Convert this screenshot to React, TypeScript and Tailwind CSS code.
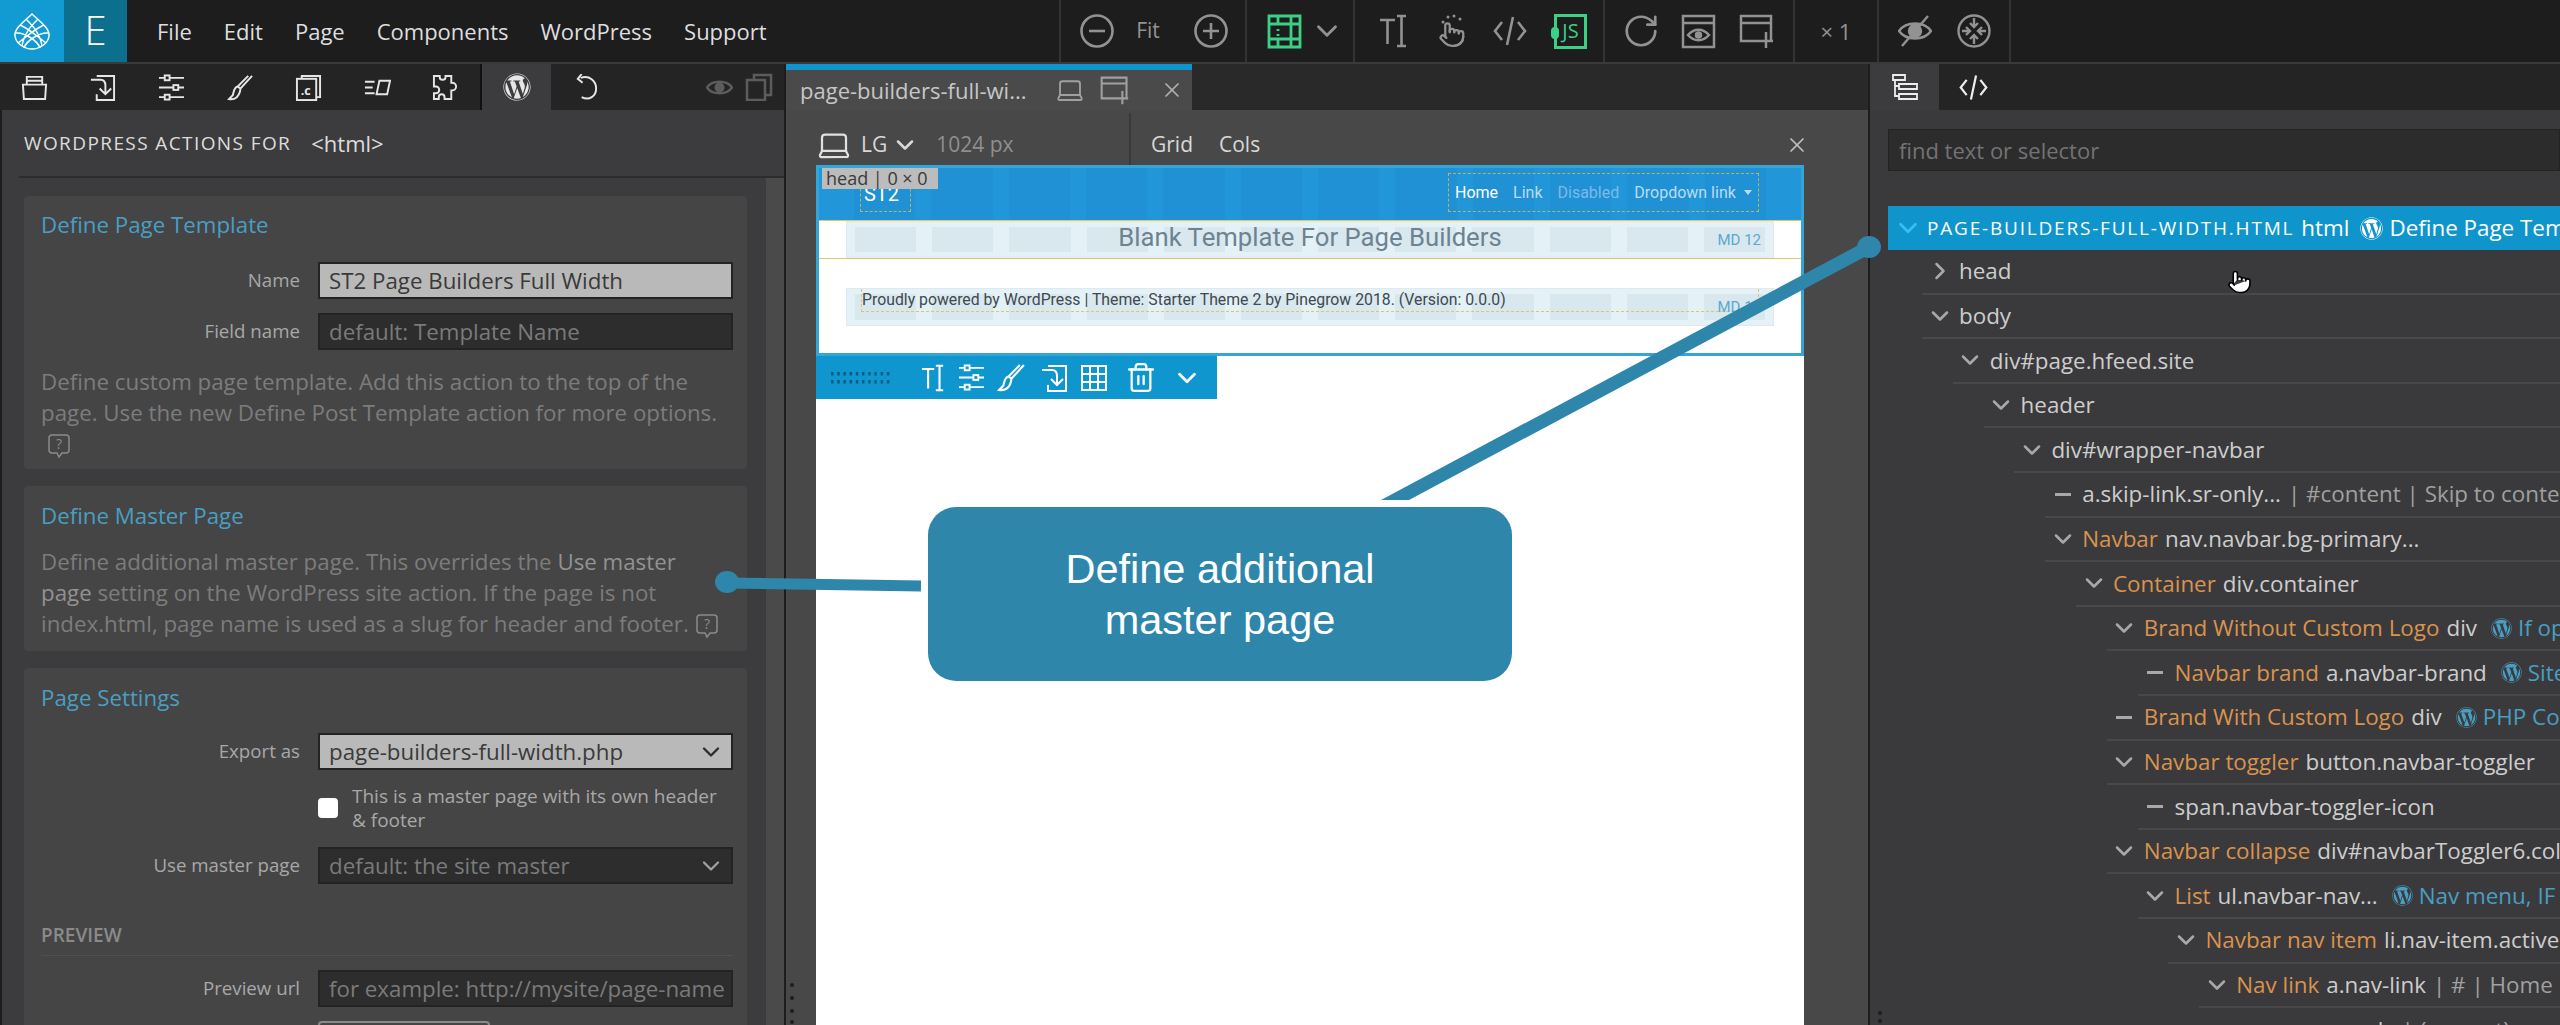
import React from "react";
import { FaWordpress } from "react-icons/fa";
import { ChevronDown, ChevronRight, Laptop, Pointer, RotateCw, Trash2, X } from "lucide-react";

type IP = { className?: string; children?: React.ReactNode; vb?: string; sw?: number };
function S({ className = "", children, vb = "0 0 28 28", sw = 2 }: IP) {
  return (
    <svg viewBox={vb} fill="none" stroke="currentColor" strokeWidth={sw} className={className}>
      {children}
    </svg>
  );
}
const Folder = (p: IP) => (
  <S {...p}><path d="M6 11V3h16v8M6 7h16M2 11h24l-1 15H3z" /></S>
);
const ImportI = (p: IP) => (
  <S {...p}><path d="M8 2h18v25H8v-6M2 6h10c4 0 5 3 5 6v9M11 15l6 6 6-6" /></S>
);
const Sliders = (p: IP) => (
  <S {...p}><path d="M1 4h6M12 4h15M1 14h15M21 14h6M1 24h6M12 24h15" /><rect x="7" y="1.5" width="5" height="5" /><rect x="16" y="11.5" width="5" height="5" /><rect x="7" y="21.5" width="5" height="5" /></S>
);
const Brush = (p: IP) => (
  <S {...p}><path d="M26 2 14 15l-3-2L22 2M11 13c-4 1-4 6-5 9l-4 4c6 1 11-2 12-11" /></S>
);
const CopyC = (p: IP) => (
  <S {...p}><path d="M7 5V2h19v22h-4" /><rect x="2" y="5" width="20" height="22" /><text x="6" y="22" fontSize="13" fill="currentColor" stroke="none" fontWeight="700" fontFamily="Open Sans">.c</text></S>
);
const Align = (p: IP) => (
  <S {...p}><path d="M1 8h10M1 14h8M1 20h10M16 7h11l-3 14H13z" /></S>
);
const Puzzle = (p: IP) => (
  <S {...p}><path d="M2 2h6v1a3 3 0 0 0 6 0V2h6v7h1a3.5 3.5 0 0 1 0 8h-1v9h-7v-2a3 3 0 0 0-6 0v2H2v-6h2a3 3 0 0 0 0-7H2z" /></S>
);
const Undo = (p: IP) => (
  <S {...p}><path d="M9 4c9-3 16 3 16 11s-7 13-15 9M10 0 6 5l5 4" /></S>
);
const Eye = (p: IP) => (
  <S {...p} sw={2.5}><path d="M1 14C6 6 22 6 27 14 22 22 6 22 1 14z" /><circle cx="14" cy="14" r="4" fill="currentColor" /></S>
);
const Pages = (p: IP) => (
  <S {...p} sw={2.5}><path d="M9 7V2h17v20h-6" /><rect x="2" y="7" width="18" height="20" /></S>
);
const TI = (p: IP) => (
  <S {...p} vb="0 0 27 34" sw={2.6}><path d="M0 6h15M7.5 6v24M17 2h9M21.500 2v30M17 32h9" /></S>
);
const Table = (p: IP) => (
  <S {...p}><path d="M2 2h24v24H2zM2 10h24M2 18h24M10 2v24M18 2v24" /></S>
);
const CodeI = (p: IP) => (
  <S {...p} vb="0 0 34 34" sw={2.6}><path d="M9 8 2 17l7 9M25 8l7 9-7 9M20 3l-6 28" /></S>
);
const Win = ({ children, ...p }: IP) => (
  <S {...p} vb="0 0 35 35" sw={2.5}>{children}</S>
);
const WinPlus = (p: IP) => (
  <Win {...p}><path d="M22 27H2V2h30v24M2 9h30M27 18v16M19 27h15" /></Win>
);
const Help = ({ className = "" }: { className?: string }) => (
  <span className={`inline-flex align-middle ${className}`}>
    <svg viewBox="0 0 24 26" fill="none" stroke="#8a8a8a" strokeWidth="1.5" className="w-[24px] h-[26px]">
      <path d="M5 2h14a3 3 0 0 1 3 3v12a3 3 0 0 1-3 3h-4l-3 4-2-4H5a3 3 0 0 1-3-3V5a3 3 0 0 1 3-3z" />
      <text x="12" y="16" textAnchor="middle" fontSize="14" fill="#8a8a8a" stroke="none" fontFamily="Open Sans">?</text>
    </svg>
  </span>
);
const Cone = () => (
  <svg viewBox="0 0 36 37" fill="none" stroke="#fff" strokeWidth="1.5" className="w-[36px] h-[37px]">
    <path d="M18 1C24 7 36 15 35 23 34 31 25 36 18 36 11 36 2 31 1 23 0 15 12 7 18 1z" />
    <path d="M12 6C18 12 26 20 28 33M24 6C18 12 10 20 8 33M6 12C14 15 24 24 32 30M30 12C22 15 12 24 4 30M2 20C10 19 24 28 26 35M34 20C26 19 12 28 10 35" />
  </svg>
);
const Sep = "border-r-2 border-[#333]";
const Green = "text-[#3ccf86]";

function Top() {
  const c = "text-[#929292]";
  return (
    <div className="h-[62px] flex bg-[#1d1d1e] text-[#9b9b9b] shrink-0">
      <div className="w-[64px] bg-[#129bd3] flex items-center justify-center"><Cone /></div>
      <div className="w-[63px] bg-[#0c6f8e] flex items-center justify-center">
        <span className="text-white text-[40px] font-light leading-none relative -top-[1px]">E</span>
      </div>
      <div className={`w-[934px] pl-[30px] flex items-center gap-[32px] text-[22px] text-[#dedede] ${Sep}`}>
        {["File", "Edit", "Page", "Components", "WordPress", "Support"].map((m) => <span key={m}>{m}</span>)}
      </div>
      <div className={`w-[186px] pl-[19px] flex items-center ${Sep} ${c}`}>
        <S className="w-[34px] h-[34px]" vb="0 0 34 34" sw={2.6}><circle cx="17" cy="17" r="15.500" /><path d="M9 17h16" /></S>
        <span className="w-[68px] text-center text-[21px]">Fit</span>
        <S className="w-[34px] h-[34px] ml-[12px]" vb="0 0 34 34" sw={2.6}><circle cx="17" cy="17" r="15.500" /><path d="M9 17h16M17 9v16" /></S>
      </div>
      <div className={`w-[108px] pl-[20px] flex items-center gap-[8px] ${Sep} ${c}`}>
        <S className={`w-[35px] h-[35px] ${Green}`} vb="0 0 35 35" sw={2.8}><path d="M2 2h31v31H2zM2 10h31M2 25h31M11 2v8M24 2v31M11 25v8M11 15v2M11 20v2" /></S>
        <ChevronDown className="w-[34px] h-[34px]" strokeWidth={2} />
      </div>
      <div className={`w-[250px] pl-[25px] flex items-center ${Sep} ${c}`}>
        <TI className="w-[27px] h-[34px]" />
        <span className="w-[30px] h-[34px] ml-[30px] relative">
          <Pointer className="w-[30px] h-[27px] absolute bottom-0 left-0" strokeWidth={2} />
          <svg viewBox="0 0 30 10" className="absolute top-0 left-0 w-[30px] h-[10px]" fill="currentColor"><circle cx="6" cy="8" r="1.500" /><circle cx="11" cy="3" r="1.500" /><circle cx="17" cy="2" r="1.500" /><circle cx="23" cy="5" r="1.500" /></svg>
        </span>
        <CodeI className="w-[34px] h-[34px] ml-[26px]" />
        <span className={`relative ml-[27px] w-[33px] h-[35px] border-[3px] border-[#3ccf86] flex items-center justify-center text-[20px] leading-none ${Green}`}>
          JS
          <span className="absolute -left-[6px] top-[10px] w-[8px] h-[12px] rounded-full bg-[#3ccf86]" />
        </span>
      </div>
      <div className={`w-[190px] pl-[19px] flex items-center gap-[23px] ${Sep} ${c}`}>
        <RotateCw className="w-[38px] h-[38px] -mx-[2px]" strokeWidth={1.7} />
        <Win className="w-[35px] h-[35px]"><path d="M2 2h31v31H2zM2 9h31" /><path d="M7 21c6-7 15-7 21 0-6 7-15 7-21 0z" /><circle cx="17.500" cy="21" r="2.500" fill="currentColor" /></Win>
        <WinPlus className="w-[35px] h-[35px]" />
      </div>
      <div className={`w-[84px] flex items-center justify-center text-[22px] ${Sep} ${c}`}>× 1</div>
      <div className={`w-[132px] pl-[19px] flex items-center gap-[25px] ${Sep} ${c}`}>
        <S className="w-[34px] h-[34px]" vb="0 0 34 34" sw={2.4}>
          <path d="M1 17C8 7 26 7 33 17 26 27 8 27 1 17z" /><circle cx="17" cy="17" r="6" fill="currentColor" /><path d="M30 2 4 32" />
        </S>
        <S className="w-[34px] h-[34px]" vb="0 0 34 34" sw={2.4}>
          <circle cx="17" cy="17" r="15.500" /><path d="M17 4v8M13 9l4 4 4-4M17 30v-8M13 25l4-4 4 4M5 17h7M9 13l4 4-4 4M29 17h-7M25 13l-4 4 4 4" />
        </S>
      </div>
      <div className="flex-1" />
    </div>
  );
}

function TabIcon({ active, children }: { active?: boolean; children: React.ReactNode }) {
  return <div className={`w-[69px] h-full flex items-center justify-center ${active ? "bg-[#3c3c3e]" : ""}`}>{children}</div>;
}

const Field = ({ label, value, light, select, mt }: { label: string; value: string; light?: boolean; select?: boolean; mt?: string }) => (
  <div className={`flex items-center ${mt ?? ""}`}>
    <div className="w-[277px] shrink-0 text-right text-[18.7px] text-[#a8a8a8] pr-[18px]">{label}</div>
    <div className={`w-[415px] shrink-0 h-[37px] pl-[9px] pr-[6px] flex items-center justify-between border-2 border-[#232323] text-[22.3px] whitespace-nowrap overflow-hidden ${light ? "bg-[#b9b9b9] text-[#3a3a3a]" : "bg-[#2d2d2e] text-[#7a7a7a]"}`}>
      <span>{value}</span>
      {select && <ChevronDown className={`w-[28px] h-[28px] shrink-0 ${light ? "text-[#2c2c2c]" : "text-[#a0a0a0]"}`} strokeWidth={2} />}
    </div>
  </div>
);

function Left() {
  return (
    <div className="w-[786px] shrink-0 h-full flex flex-col border-r-2 border-[#1d1d1e] overflow-hidden">
      <div className="h-[46px] flex bg-[#242425] items-center text-[#e6e6e6] shrink-0">
        <div className="flex h-full w-[482px] border-r-2 border-[#111]">
          {[Folder, ImportI, Sliders, Brush, CopyC, Align, Puzzle].map((I, i) => (
            <TabIcon key={i}><I className="w-[27px] h-[27px]" /></TabIcon>
          ))}
        </div>
        <TabIcon active><FaWordpress className="w-[28px] h-[28px]" /></TabIcon>
        <TabIcon><Undo className="w-[27px] h-[27px]" /></TabIcon>
        <div className="flex-1 flex items-center justify-end gap-[12px] pr-[11px] text-[#5c5c5c]">
          <Eye className="w-[27px] h-[27px]" />
          <Pages className="w-[28px] h-[28px]" />
        </div>
      </div>
      <div className="flex-1 min-h-0 bg-[#3c3c3e] border-l-2 border-[#1d1d1e] relative">
        <div className="h-[68px] ml-[17px] flex items-center pl-[5px] border-b-2 border-[#2c2c2d] text-[19px] text-[#dcdcdc]">
          <span className="tracking-[1.4px]">WORDPRESS ACTIONS FOR</span>
          <span className="ml-[20px] text-[22px]">&lt;html&gt;</span>
        </div>
        <div className="absolute right-0 top-[68px] bottom-0 w-[18px] bg-[#4a4a4b]" />
        <div className="pl-[22px] w-[745px] pt-[18px] flex flex-col gap-[17px]">
          <div className="bg-[#454546] rounded-[4px] h-[273px] pl-[17px] pr-[14px] pt-[14px]">
            <h3 className="text-[22.3px] text-[#4a9ec2] leading-[30px]">Define Page Template</h3>
            <Field label="Name" value="ST2 Page Builders Full Width" light mt="mt-[22px]" />
            <Field label="Field name" value="default: Template Name" mt="mt-[14px]" />
            <p className="mt-[16px] text-[22.3px] leading-[31px] text-[#7c7c7c] whitespace-nowrap">
              Define custom page template. Add this action to the top of the<br />
              page. Use the new Define Post Template action for more options.<br />
              <Help className="ml-[6px]" />
            </p>
          </div>
          <div className="bg-[#454546] rounded-[4px] h-[165px] pl-[17px] pr-[14px] pt-[15px]">
            <h3 className="text-[22.3px] text-[#4a9ec2] leading-[30px]">Define Master Page</h3>
            <p className="mt-[15px] text-[22.3px] leading-[31px] text-[#7c7c7c] whitespace-nowrap">
              Define additional master page. This overrides the <span className="text-[#929292]">Use master</span><br />
              <span className="text-[#929292]">page</span> setting on the WordPress site action. If the page is not<br />
              index.html, page name is used as a slug for header and footer. <Help />
            </p>
          </div>
          <div className="bg-[#454546] rounded-[4px] h-[400px] pl-[17px] pr-[14px] pt-[15px]">
            <h3 className="text-[22.3px] text-[#4a9ec2] leading-[30px]">Page Settings</h3>
            <Field label="Export as" value="page-builders-full-width.php" light select mt="mt-[20px]" />
            <div className="flex items-center mt-[11px] h-[54px]">
              <div className="ml-[277px] w-[20px] h-[20px] bg-white rounded-[4px]" />
              <div className="ml-[14px] text-[19px] leading-[24px] text-[#a8a8a8] whitespace-nowrap">This is a master page with its own header<br />&amp; footer</div>
            </div>
            <Field label="Use master page" value="default: the site master" select mt="mt-[12px]" />
            <div className="mt-[38px] text-[19px] text-[#8a8a8a] font-semibold border-b border-[#505051] h-[34px] leading-[26px]">PREVIEW</div>
            <Field label="Preview url" value="for example: http://mysite/page-name" mt="mt-[14px]" />
            <div className="ml-[277px] mt-[14px] w-[172px] h-[30px] border-2 border-[#8a8a8a] rounded-[4px]" />
          </div>
        </div>
      </div>
    </div>
  );
}

function Cols({ dark }: { dark?: boolean }) {
  return (
    <div className={`absolute inset-x-0 flex gap-[16px] px-[8px] ${dark ? "inset-y-0" : "inset-y-[5px]"}`}>
      {Array.from({ length: 12 }).map((_, i) => (
        <div key={i} className={`flex-1 ${dark ? "bg-[#1f91d4]" : "bg-[#d9e8ee]"}`} />
      ))}
    </div>
  );
}

function Center() {
  return (
    <div className="w-[1084px] shrink-0 h-full flex flex-col bg-[#484849] border-r-2 border-[#1d1d1e] overflow-hidden">
      <div className="h-[46px] bg-[#29292a] shrink-0">
        <div className="w-[406px] h-full bg-[#4a4a4b] border-t-[6px] border-[#1193cd] flex items-center pl-[14px] text-[#c6c6c6]">
          <span className="text-[22px] w-[255px] whitespace-nowrap">page-builders-full-wi...</span>
          <Laptop className="w-[30px] h-[30px] text-[#a0a0a0] shrink-0" strokeWidth={1.500} />
          <WinPlus className="w-[29px] h-[29px] ml-[15px] text-[#a0a0a0] shrink-0" />
          <X className="w-[24px] h-[24px] ml-[31px] text-[#b0b0b0] shrink-0" strokeWidth={1.700} />
        </div>
      </div>
      <div className="h-[55px] shrink-0 flex text-[#d8d8d8] items-stretch">
        <div className="w-[345px] mt-[3px] pt-[11px] border-r-2 border-[#3a3a3b] flex items-center pl-[30px]">
          <Laptop className="w-[36px] h-[36px] text-[#e0e0e0]" strokeWidth={1.500} />
          <span className="ml-[9px] text-[21px]">LG</span>
          <ChevronDown className="w-[28px] h-[28px] ml-[4px]" strokeWidth={2.200} />
          <span className="ml-[17px] text-[21px] text-[#8f8f8f]">1024 px</span>
        </div>
        <div className="flex-1 mt-[3px] pt-[11px] flex items-center">
          <span className="ml-[20px] text-[21px]">Grid</span>
          <span className="ml-[26px] text-[21px]">Cols</span>
          <X className="w-[24px] h-[24px] ml-auto mr-[59px] text-[#c0c0c0]" strokeWidth={1.700} />
        </div>
      </div>
      <div className="ml-[30px] w-[988px] flex-1 bg-white relative">
        <div className="border-[3px] border-[#35a5d5] h-[191px] font-['Roboto','Liberation_Sans',sans-serif]">
          <div className="h-[52px] bg-[#2196d9] relative">
            <div className="absolute inset-y-0 left-[27px] right-[27px]"><Cols dark /></div>
            <div className="absolute left-[41px] top-[5px] h-[39px] w-[51px] border border-dashed border-[#b7b75a] text-white text-[20px] pt-[8px] pl-[3px] leading-[24px]">ST2</div>
            <div className="absolute left-[3px] top-[0px] h-[21px] w-[116px] bg-[#bcbcbc] text-[#3a3a3a] text-[18px] leading-[21px] pl-[4px] font-['Open_Sans',sans-serif] whitespace-nowrap">head | 0 × 0</div>
            <div className="absolute left-[629px] right-[42px] top-[5px] h-[39px] border border-dashed border-[#b7b75a] flex items-center pl-[6px] gap-[15px] text-[16px] whitespace-nowrap text-[#b9dcf2]">
              <span className="text-white">Home</span><span>Link</span><span className="text-[#7bbce6]">Disabled</span>
              <span className="flex items-center gap-[8px]">Dropdown link<span className="w-0 h-0 border-x-[4px] border-x-transparent border-t-[5px] border-t-[#b9dcf2]" /></span>
            </div>
          </div>
          <div className="h-[39px] relative border-y border-[#e4c66a] px-[27px]">
            <div className="h-full relative bg-[#e4f2f8] border border-[#dfe9ee]">
              <Cols />
              <div className="absolute inset-0 flex items-center justify-center text-[25.7px] text-[#6d8392] leading-none pb-[4px]">Blank Template For Page Builders</div>
              <span className="absolute right-[12px] top-[7px] text-[15px] text-[#5aa9cf]">MD 12</span>
            </div>
          </div>
          <div className="h-[38px] mt-[29px] mx-[27px] relative bg-[#e4f2f8] border border-[#dfe9ee]">
            <Cols />
            <div className="absolute left-[14px] right-[14px] top-0 h-[23px] border border-dashed border-t-0 border-[#d8c774] text-[15.8px] text-[#40494f] whitespace-nowrap leading-[22px]">Proudly powered by WordPress | Theme: Starter Theme 2 by Pinegrow 2018. (Version: 0.0.0)</div>
            <span className="absolute right-[12px] top-[7px] text-[15px] text-[#5aa9cf]">MD 12</span>
          </div>
        </div>
        <div className="w-[401px] h-[43px] bg-[#0f96cf] flex items-center text-white">
          <svg viewBox="0 0 60 16" className="w-[60px] h-[16px] ml-[15px] text-[#0a5d85]" fill="currentColor">
            {[0, 1, 2, 3, 4, 5, 6, 7, 8, 9].map((i) => (
              <g key={i}><rect x={i * 6.2} y="2" width="2.500" height="3.500" /><rect x={i * 6.2} y="10" width="2.500" height="3.500" /></g>
            ))}
          </svg>
          <TI className="w-[22px] h-[28px] ml-[31px] text-white" />
          <Sliders className="w-[29px] h-[27px] ml-[13px]" />
          <Brush className="w-[29px] h-[29px] ml-[11px]" />
          <ImportI className="w-[28px] h-[28px] ml-[14px]" />
          <Table className="w-[28px] h-[28px] ml-[12px]" />
          <Trash2 className="w-[32px] h-[33px] ml-[17px]" strokeWidth={1.700} />
          <ChevronDown className="w-[30px] h-[30px] ml-[15px]" strokeWidth={2.200} />
        </div>
      </div>
    </div>
  );
}

type Row = { d: number; i: "v" | ">" | "-"; label?: string; tag: string; wp?: string; rest?: string };
const rows: Row[] = [
  { d: 0, i: ">", tag: "head" },
  { d: 0, i: "v", tag: "body" },
  { d: 1, i: "v", tag: "div#page.hfeed.site" },
  { d: 2, i: "v", tag: "header" },
  { d: 3, i: "v", tag: "div#wrapper-navbar" },
  { d: 4, i: "-", tag: "a.skip-link.sr-only...", rest: "| #content | Skip to content" },
  { d: 4, i: "v", label: "Navbar", tag: "nav.navbar.bg-primary..." },
  { d: 5, i: "v", label: "Container", tag: "div.container" },
  { d: 6, i: "v", label: "Brand Without Custom Logo", tag: "div", wp: "If option" },
  { d: 7, i: "-", label: "Navbar brand", tag: "a.navbar-brand", wp: "Site name" },
  { d: 6, i: "-", label: "Brand With Custom Logo", tag: "div", wp: "PHP Code" },
  { d: 6, i: "v", label: "Navbar toggler", tag: "button.navbar-toggler" },
  { d: 7, i: "-", tag: "span.navbar-toggler-icon" },
  { d: 6, i: "v", label: "Navbar collapse", tag: "div#navbarToggler6.collapse" },
  { d: 7, i: "v", label: "List", tag: "ul.navbar-nav...", wp: "Nav menu, IF logged" },
  { d: 8, i: "v", label: "Navbar nav item", tag: "li.nav-item.active" },
  { d: 9, i: "v", label: "Nav link", tag: "a.nav-link", rest: "| # | Home" },
  { d: 10, i: "-", tag: "span.sr-only", rest: "| (current)" },
];

function TreeRow({ r }: { r: Row }) {
  return (
    <div className="h-[44.6px] flex items-center border-b-2 border-[#484849] whitespace-nowrap" style={{ marginLeft: 52 + r.d * 30.8 }}>
      <span className="w-[37px] shrink-0 flex justify-center pr-[2px] text-[#a8a8a8]">
        {r.i === "v" && <ChevronDown className="w-[28px] h-[28px]" strokeWidth={2.200} />}
        {r.i === ">" && <ChevronRight className="w-[28px] h-[28px]" strokeWidth={2.200} />}
        {r.i === "-" && <span className="w-[16px] h-[3px] bg-[#a8a8a8]" />}
      </span>
      {r.label && <span className="text-[#d9934e] mr-[7px]">{r.label}</span>}
      <span>{r.tag}</span>
      {r.rest && <span className="ml-[7px] text-[#a0a0a0]">{r.rest}</span>}
      {r.wp && (
        <span className="ml-[14px] flex items-center gap-[6px] text-[#4a9ec2]"><FaWordpress className="w-[21px] h-[21px] shrink-0" />{r.wp}</span>
      )}
    </div>
  );
}

function Right() {
  return (
    <div className="flex-1 min-w-0 h-full flex flex-col bg-[#3a3a3c] overflow-hidden relative">
      <div className="h-[46px] flex bg-[#242425] shrink-0 text-[#ededed]">
        <TabIcon active>
          <S className="w-[28px] h-[28px]" sw={1.800}><path d="M2 2h12v5H2zM8 11h18v5H8zM8 21h18v5H8zM4 7v16h4M4 13h4" /></S>
        </TabIcon>
        <TabIcon><CodeI className="w-[29px] h-[29px]" /></TabIcon>
      </div>
      <div className="ml-[18px] mt-[19px] h-[42px] bg-[#2c2c2d] border border-[#232324] pl-[10px] flex items-center text-[22px] text-[#737373] shrink-0">find text or selector</div>
      <div className="ml-[18px] mt-[35px] h-[44px] bg-[#0f95cb] flex items-center text-[22.4px] text-white whitespace-nowrap shrink-0">
        <ChevronDown className="w-[30px] h-[30px] ml-[5px] text-[#35c0f4] shrink-0" strokeWidth={2.200} />
        <span className="ml-[4px] text-[19px] tracking-[1.8px]">PAGE-BUILDERS-FULL-WIDTH.HTML</span>
        <span className="ml-[7px]">html</span>
        <FaWordpress className="w-[23px] h-[23px] ml-[11px] shrink-0" />
        <span className="ml-[6px]">Define Page Template</span>
      </div>
      <div className="text-[22.4px] text-[#cdcdcd]">
        {rows.map((r, i) => <TreeRow key={i} r={r} />)}
      </div>
      <Pointer className="absolute left-[357px] top-[204px] w-[25px] h-[28px] text-black" fill="#fff" strokeWidth={1.500} />
    </div>
  );
}

export default function App() {
  return (
    <div className="relative w-[2560px] h-[1025px] overflow-hidden flex flex-col bg-[#1d1d1e] font-['Open_Sans',sans-serif]">
      <Top />
      <div className="h-[2px] bg-[#3a3a3b] shrink-0" />
      <div className="flex-1 min-h-0 flex">
        <Left />
        <Center />
        <Right />
      </div>
      <svg className="absolute inset-0 w-[2560px] h-[1025px] pointer-events-none" viewBox="0 0 2560 1025">
        <path d="M727 583 921 586" stroke="#2e86ab" strokeWidth="11" />
        <ellipse cx="727" cy="582" rx="12" ry="11" fill="#2e86ab" />
        <polygon points="1381,500 1409,500 1870,254 1870,239" fill="#2e86ab" />
        <ellipse cx="1869" cy="247" rx="12" ry="11" fill="#2e86ab" />
        <g fill="#1d1d1e">
          <circle cx="792" cy="985" r="2" /><circle cx="792" cy="998" r="2" /><circle cx="792" cy="1011" r="2" />
          <circle cx="792" cy="1022" r="2" /><circle cx="1880" cy="1013" r="2" /><circle cx="1880" cy="1021" r="2" />
        </g>
      </svg>
      <div className="absolute left-[928px] top-[507px] w-[584px] h-[174px] rounded-[28px] bg-[#2e86ab] flex items-center justify-center text-center text-white text-[41.500px] leading-[51px] font-['Liberation_Sans',sans-serif]">
        Define additional<br />master page
      </div>
    </div>
  );
}
